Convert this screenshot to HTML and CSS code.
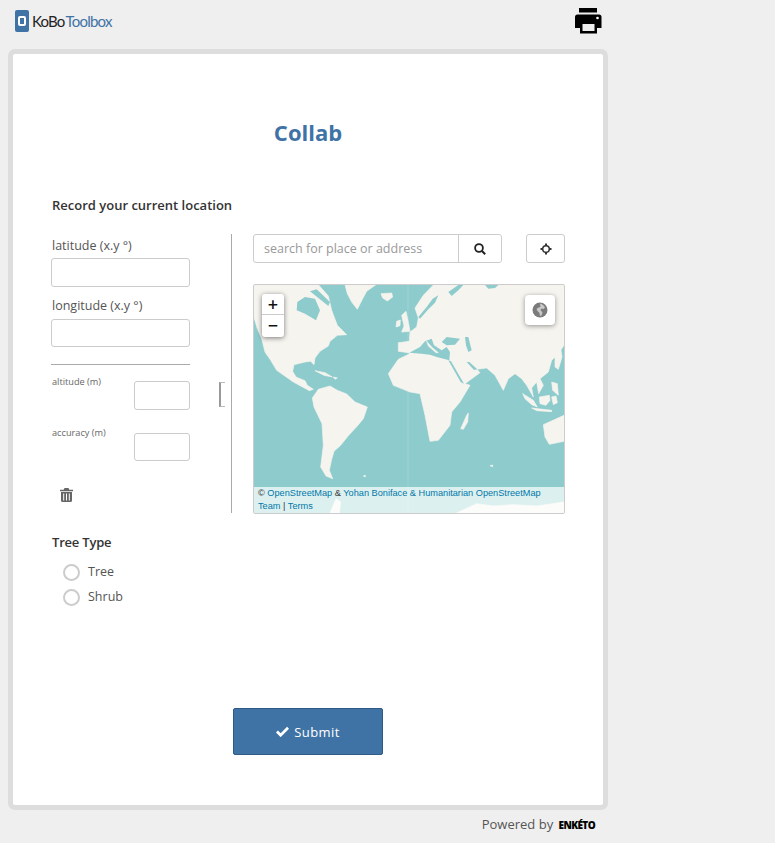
FILE: index.html
```html
<!DOCTYPE html>
<html>
<head>
    <title>Collab</title>
    <link rel="stylesheet" href="styles.css">
</head>
<body>
    <header class="page-header">
        <div class="logo">
            <span class="logo-mark"><span class="logo-mark-inner"></span></span>
            <span class="logo-text">KoBo<span class="logo-blue">Toolbox</span></span>
        </div>
        <svg class="print-icon" viewBox="0 0 27 26" aria-label="print">
            <rect x="4" y="0" width="18" height="4.500" fill="#000"/>
            <path d="M2.500 6.500H24a2.500 2.500 0 0 1 2.500 2.500v11H22v5.500H5V20H0V9a2.500 2.500 0 0 1 2.500-2.500z" fill="#000"/>
            <rect x="7.500" y="16" width="12" height="7" fill="#efefef"/>
            <circle cx="22.500" cy="10" r="1.300" fill="#fff"/>
        </svg>
    </header>

    <form class="form-box">
        <h2 class="form-title">Collab</h2>

        <div class="question-label">Record your current location</div>

        <div class="geo-row">
            <div class="geo-inputs">
                <label class="geo-label" for="lat">latitude (x.y °)</label>
                <input class="text-input" type="text" id="lat">
                <label class="geo-label geo-label-second" for="lng">longitude (x.y °)</label>
                <input class="text-input text-input-short" type="text" id="lng">
                <div class="geo-rule"></div>

                <div class="small-row">
                    <label class="small-label" for="alt">altitude (m)</label>
                    <input class="small-input" type="text" id="alt">
                    <span class="bracket"></span>
                </div>
                <div class="small-row small-row-second">
                    <label class="small-label" for="acc">accuracy (m)</label>
                    <input class="small-input small-input-short" type="text" id="acc">
                </div>

                <svg class="trash-icon" viewBox="0 0 13 14" aria-label="delete">
                    <path d="M4.500 0h4l.8 1.700H13v1.500H0V1.700h3.700z" fill="#666"/>
                    <path d="M1 4h11v8.500a1.500 1.500 0 0 1-1.500 1.500h-8A1.500 1.500 0 0 1 1 12.500z" fill="#666"/>
                    <path d="M3.700 5.500v7M6.500 5.500v7M9.300 5.500v7" stroke="#fff" stroke-width="1"/>
                </svg>
            </div>

            <div class="geo-map-col">
                <div class="search-row">
                    <div class="search-box">
                        <input class="search-input" type="text" placeholder="search for place or address">
                        <button class="search-btn" type="button" aria-label="search">
                            <svg viewBox="0 0 12 12" width="12" height="12">
                                <circle cx="5" cy="5" r="3.900" fill="none" stroke="#222" stroke-width="1.800"/>
                                <path d="M8 8l3.200 3.200" stroke="#222" stroke-width="2"/>
                            </svg>
                        </button>
                    </div>
                    <button class="locate-btn" type="button" aria-label="detect location">
                        <svg viewBox="0 0 12 12" width="12" height="12">
                            <circle cx="6" cy="6" r="3.300" fill="none" stroke="#333" stroke-width="1.500"/>
                            <path d="M6 .5v2.500M6 9v2.500M.5 6H3M9 6h2.500" stroke="#333" stroke-width="2"/>
                        </svg>
                    </button>
                </div>

                <div class="map">
                    <svg class="map-svg" viewBox="12 9 930 684" preserveAspectRatio="none">
                        <rect x="12" y="9" width="930" height="684" fill="#8dcbcc"/>
                        <g class="map-land">
                            <!-- north america -->
                            <path d="M10 8L205 8L235 42L245 85L262 130L290 158L262 160L240 178L235 192L210 208L195 228L192 248L182 238L165 240L132 248L128 268L138 285L165 296L172 310L190 322L178 326L130 300L80 265L62 235L45 210L35 170L22 140L10 100Z"/>
                            <path d="M195 266L225 272L247 285L222 280Z"/>
                            <path d="M250 285L262 288L255 292Z"/>
                            <!-- greenland, iceland, uk -->
                            <path d="M285 8L378 8L350 28L338 50L322 82L305 60L292 35Z"/>
                            <path d="M393 35L425 33L428 45L412 57L398 48Z"/>
                            <path d="M455 100L468 88L476 125L480 148L455 150L462 132Z"/>
                            <path d="M440 118L451 114L450 131L438 135Z"/>
                            <!-- south america -->
                            <path d="M187 348L205 322L240 312L262 325L290 336L315 360L352 375L340 410L322 432L296 460L272 490L252 508L245 532L238 565L248 590L228 582L212 555L220 490L216 425L192 375Z"/>
                            <!-- africa and eurasia -->
                            <path d="M480 215L445 232L415 275L430 310L480 330L510 335L525 400L540 478L565 475L600 430L605 390L630 360L660 310L645 305L690 272L670 250L680 262L710 258L735 280L760 325L775 290L795 275L815 290L830 310L850 345L845 318L860 300L866 335L880 310L870 290L895 270L905 235L925 215L942 190L942 9L550 9L520 40L495 78L505 108L500 135L480 150L478 178L445 182L445 208L475 212Z"/>
                            <!-- madagascar, indonesia, japan, australia -->
                            <path d="M632 440L650 400L655 393L653 420L640 442Z"/>
                            <path d="M818 335L850 355L862 375L845 368L825 350Z"/>
                            <path d="M868 345L898 340L900 355L888 370L870 365Z"/>
                            <path d="M845 378L905 385L905 389L860 386Z"/>
                            <path d="M905 345L918 342L922 362L910 368Z"/>
                            <path d="M905 300L922 305L925 340L908 325Z"/>
                            <path d="M915 215L932 198L936 225L925 262L915 255Z"/>
                            <path d="M880 428L942 400L942 478L898 487L885 465Z"/>
                            <!-- antarctica, behind the attribution -->
                            <path d="M240 693L258 650L272 660L268 693Z"/>
                            <path d="M620 693L680 665L730 672L790 668L860 672L942 660L942 693Z"/>
                            <path d="M340 582L346 580L346 585Z"/>
                            <path d="M720 551L728 549L728 554Z"/>
                        </g>
                        <g fill="#8dcbcc">
                            <!-- hudson bay and baffin strait -->
                            <path d="M142 60L165 45L195 50L210 85L198 115L165 95L140 85Z"/>
                            <path d="M180 28L200 22L240 60L235 72Z"/>
                            <!-- inland seas -->
                            <path d="M478 212L510 195L525 178L545 170L552 190L575 205L590 195L600 210L598 235L560 225L540 218L515 215Z"/>
                            <path d="M575 180L590 165L630 170L615 188L590 190Z"/>
                            <path d="M645 165L655 165L665 205L655 210L648 190Z"/>
                            <path d="M595 235L603 238L642 305L632 300Z"/>
                            <path d="M650 240L658 240L682 262L672 264Z"/>
                            <path d="M565 40L555 62L535 82L510 110L505 105L530 75L548 50Z"/>
                            <path d="M595 30L625 9L640 9L625 25L605 42Z"/>
                            <path d="M705 9L745 9L735 18L715 20Z"/>
                        </g>
                        <path class="map-land" d="M530 178L545 195L565 212L558 212L535 192Z"/>
                        <path d="M474 9V693" stroke="#fff" stroke-opacity=".25" stroke-width="2"/>
                    </svg>

                    <div class="zoom-control">
                        <div class="zoom-btn zoom-btn-in">+</div>
                        <div class="zoom-btn zoom-btn-out">−</div>
                    </div>

                    <div class="layers-btn">
                        <svg viewBox="0 0 16 16" width="16" height="16">
                            <circle cx="8" cy="8" r="7.500" fill="#7b7b7b"/>
                            <path d="M8 1.500c2 .5 4 2 5 4l-1.500 1.500-2-.5-1 1.500 2 2.500-1 3-1.500.5-.5-3-2-2-1-2 2-1.500 2-.5z" fill="#c9c9c9"/>
                        </svg>
                    </div>

                    <div class="attribution">© <a>OpenStreetMap</a> &amp; <a>Yohan Boniface &amp; Humanitarian OpenStreetMap Team</a> | <a>Terms</a></div>
                </div>
            </div>
        </div>

        <div class="question-label tree-label">Tree Type</div>
        <label class="radio-row"><input type="radio" name="tree_type"><span>Tree</span></label>
        <label class="radio-row"><input type="radio" name="tree_type"><span>Shrub</span></label>

        <button class="submit-btn" type="button">
            <svg viewBox="0 0 14 11" width="13" height="11">
                <path d="M1 5.500l4 4L13 1.500" fill="none" stroke="#fff" stroke-width="3"/>
            </svg>
            Submit
        </button>
    </form>

    <footer class="page-footer">Powered by <span class="enketo">ENKÉTO</span></footer>
</body>
</html>
```

FILE: styles.css
```css
html, body {
    height: 100%;
}

body {
    font-family: "Open Sans", sans-serif;
    background-color: #efefef;
    color: #444;
    margin: 0;
    padding: 0;
    overflow: hidden;
}

.page-header {
    width: 600px;
    height: 49px;
    margin-left: 8px;
    display: flex;
    justify-content: space-between;
    box-sizing: border-box;
    padding: 8px 6px 0 7px;
}

.logo {
    display: flex;
    align-items: flex-start;
    margin-top: 2px;
}

.logo-mark {
    width: 14px;
    height: 22px;
    background-color: #3f73a6;
    border-radius: 2px;
    display: flex;
    align-items: center;
    justify-content: center;
}

.logo-mark-inner {
    width: 4px;
    height: 6px;
    border: 2px solid #fff;
    border-radius: 2px;
}

.logo-text {
    font-family: "Lato", sans-serif;
    font-size: 15px;
    line-height: 22px;
    letter-spacing: -0.8px;
    margin-left: 3px;
    color: #222;
}

.logo-blue {
    color: #3f73a6;
    margin-left: 1px;
}

.print-icon {
    width: 27px;
    height: 26px;
}

.form-box {
    width: 600px;
    height: 761px;
    margin-left: 8px;
    box-sizing: border-box;
    background-color: #fff;
    border: 5px solid #ddd;
    border-radius: 7px;
    padding: 63px 38px 0;
}

.form-title {
    margin: 0;
    text-align: center;
    font-size: 22px;
    line-height: 30px;
    font-weight: 700;
    color: #3f73a6;
}

.question-label {
    margin: 48px 0 19px 1px;
    font-size: 13px;
    line-height: 20px;
    font-weight: 600;
    color: #333;
}

.geo-row {
    display: flex;
    height: 280px;
}

.geo-inputs {
    width: 181px;
    height: 279px;
    box-sizing: border-box;
    border-right: 1px solid #aaa;
    padding-top: 2px;
}

.geo-label {
    display: block;
    margin: 0 0 2px 1px;
    font-size: 12.500px;
    line-height: 20px;
    color: #555;
}

.geo-label-second {
    margin-top: 9px;
    margin-bottom: 3px;
}

.text-input,
.small-input {
    display: block;
    box-sizing: border-box;
    border: 1px solid #ccc;
    border-radius: 3px;
    background-color: #fff;
    padding: 0 8px;
    margin: 0;
}

.text-input {
    width: 139px;
    height: 29px;
}

.text-input-short {
    height: 28px;
}

.geo-rule {
    width: 139px;
    height: 1px;
    background-color: #aaa;
    margin: 17px 0 10px;
}

.small-row {
    display: flex;
    width: 174px;
}

.small-row-second {
    margin-top: 16px;
}

.small-label {
    width: 82px;
    margin-left: 1px;
    font-size: 9.200px;
    line-height: 13px;
    color: #666;
}

.small-input {
    width: 56px;
    height: 29px;
    margin-top: 6px;
}

.small-input-short {
    height: 28px;
    margin-top: 7px;
}

.bracket {
    width: 4px;
    height: 23px;
    margin: 7px 0 0 29px;
    border: 1px solid #bbb;
    border-left: 2px solid #999;
    border-right: none;
}

.trash-icon {
    display: block;
    width: 13px;
    height: 14px;
    margin: 27px 0 0 9px;
}

.geo-map-col {
    width: 312px;
    margin-left: 21px;
}

.search-row {
    display: flex;
    justify-content: space-between;
    height: 29px;
}

.search-box {
    width: 249px;
    display: flex;
    box-sizing: border-box;
    border: 1px solid #ccc;
    border-radius: 3px;
}

.search-input {
    flex: 1;
    min-width: 0;
    border: none;
    outline: none;
    background: none;
    padding: 0 10px;
    font-family: "Open Sans", sans-serif;
    font-size: 12.500px;
    color: #444;
}

.search-input::placeholder {
    color: #999;
}

.search-btn,
.locate-btn {
    display: flex;
    align-items: center;
    justify-content: center;
    background-color: #fff;
    padding: 0;
    margin: 0;
}

.search-btn {
    width: 43px;
    border: none;
    border-left: 1px solid #ccc;
    border-radius: 0 3px 3px 0;
}

.locate-btn {
    width: 39px;
    border: 1px solid #ccc;
    border-radius: 3px;
}

.map {
    position: relative;
    width: 312px;
    height: 230px;
    margin-top: 21px;
    box-sizing: border-box;
    border: 1px solid #ccc;
    border-radius: 2px;
    overflow: hidden;
}

.map-svg {
    display: block;
    width: 310px;
    height: 228px;
}

/* rounds off the hand-drawn coastlines a little */
.map-land {
    fill: #f6f4ef;
    stroke: #f6f4ef;
    stroke-width: 2;
    stroke-linejoin: round;
}

.zoom-control {
    position: absolute;
    left: 8px;
    top: 9px;
    width: 22px;
    background-color: #fff;
    border-radius: 3px;
    box-shadow: 0 1px 5px rgba(0, 0, 0, 0.5);
}

.zoom-btn {
    box-sizing: border-box;
    height: 21px;
    font-size: 18px;
    font-weight: 600;
    line-height: 20px;
    text-align: center;
    color: #111;
}

.zoom-btn-in {
    border-bottom: 1px solid #ccc;
}

.zoom-btn-out {
    height: 22px;
}

.layers-btn {
    position: absolute;
    right: 9px;
    top: 10px;
    width: 30px;
    height: 30px;
    background-color: #fff;
    border-radius: 4px;
    box-shadow: 0 1px 5px rgba(0, 0, 0, 0.4);
    display: flex;
    align-items: center;
    justify-content: center;
}

.attribution {
    position: absolute;
    left: 0;
    right: 0;
    bottom: 0;
    padding: 0 4px;
    background-color: rgba(255, 255, 255, 0.7);
    font-family: "Liberation Sans", Arial, sans-serif;
    font-size: 9.200px;
    line-height: 13px;
    color: #333;
}

.attribution a {
    color: #0078a8;
}

.tree-label {
    margin-top: 18px;
    margin-bottom: 8px;
    letter-spacing: -0.2px;
}

.radio-row {
    display: flex;
    align-items: center;
    height: 25px;
    margin-left: 12px;
    font-size: 12.500px;
    color: #555;
}

.radio-row span {
    margin-top: -3px;
}

.radio-row input {
    appearance: none;
    width: 17px;
    height: 17px;
    box-sizing: border-box;
    border: 2px solid #ccc;
    border-radius: 50%;
    margin: 0 8px 0 0;
}

.submit-btn {
    display: flex;
    align-items: center;
    justify-content: center;
    gap: 5px;
    width: 150px;
    height: 47px;
    margin: 98px auto 0;
    background-color: #3f73a6;
    border: 1px solid #2f5a85;
    border-radius: 2px;
    color: #fff;
    font-family: "Open Sans", sans-serif;
    font-size: 13px;
    font-weight: 400;
    letter-spacing: 0.4px;
}

.page-footer {
    width: 600px;
    margin: 2px 0 0 8px;
    box-sizing: border-box;
    padding-right: 13px;
    text-align: right;
    font-size: 13px;
    line-height: 24px;
    color: #555;
}

.enketo {
    font-size: 10px;
    font-weight: 800;
    letter-spacing: -0.6px;
    color: #000;
    margin-left: 2px;
}
```
